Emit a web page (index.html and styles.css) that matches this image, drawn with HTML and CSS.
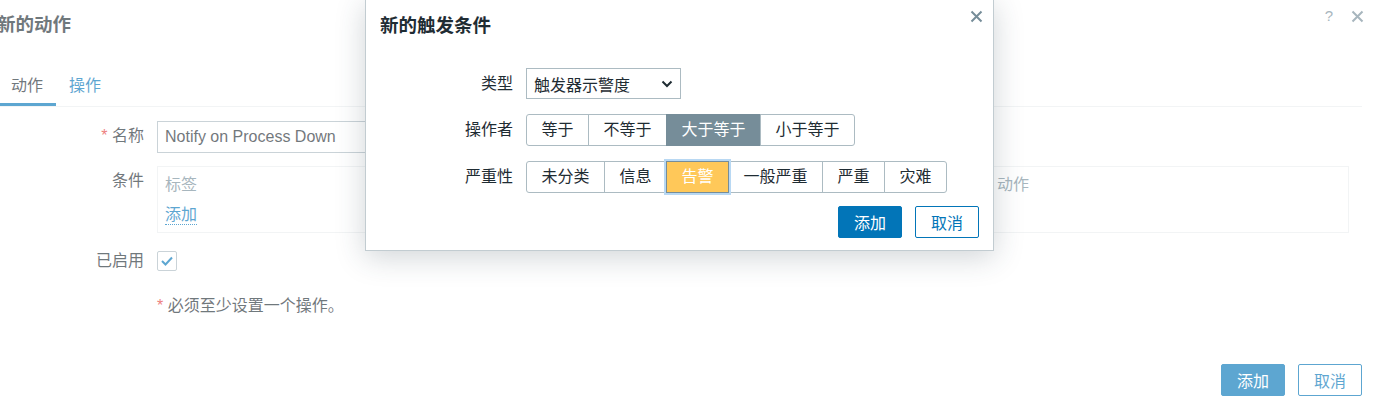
FILE: index.html
```html
<!DOCTYPE html>
<html lang="zh">
<head>
<meta charset="utf-8">
<title>新的触发条件</title>
<link rel="stylesheet" href="styles.css">
</head>
<body>
<div class="page">
  <div class="dlg">
    <div class="dlg-head">
      <h4 class="dlg-title">新的动作</h4>
      <div class="head-tools">
        <span class="help">?</span>
        <svg class="x-icon" width="13" height="13" viewBox="0 0 13 13"><path d="M1.5 1.5 L11.5 11.5 M11.5 1.5 L1.5 11.5" stroke="currentColor" stroke-width="2" fill="none"/></svg>
      </div>
    </div>
    <div class="tabs">
      <a class="tab active">动作</a>
      <a class="tab">操作</a>
    </div>
    <div class="form">
      <div class="lbl"><span class="req">*</span> 名称</div>
      <div class="ctl"><div class="text-input">Notify on Process Down</div></div>

      <div class="lbl">条件</div>
      <div class="ctl">
        <div class="cond">
          <div class="cond-row">
            <span class="cond-h c1">标签</span>
            <span class="cond-h c2">名称</span>
            <span class="cond-h c3">动作</span>
          </div>
          <div class="cond-row"><a class="link">添加</a></div>
        </div>
      </div>

      <div class="lbl lbl-cb">已启用</div>
      <div class="ctl ctl-cb">
        <span class="cb"><svg width="14" height="12" viewBox="0 0 14 12"><path d="M2 6 L5.5 9.5 L12 2.5" stroke="#0275b8" stroke-width="2" fill="none"/></svg></span>
      </div>

      <div></div>
      <div class="note"><span class="req">*</span> 必须至少设置一个操作。</div>
    </div>
    <div class="foot">
      <button class="btn primary">添加</button>
      <button class="btn alt">取消</button>
    </div>
  </div>

  <div class="dim"></div>

  <div class="modal">
    <div class="modal-head">
      <h4 class="modal-title">新的触发条件</h4>
      <svg class="modal-x" width="13" height="13" viewBox="0 0 13 13"><path d="M1.5 1.5 L11.5 11.5 M11.5 1.5 L1.5 11.5" stroke="currentColor" stroke-width="2" fill="none"/></svg>
    </div>
    <div class="mform">
      <div class="mlbl">类型</div>
      <div class="mctl">
        <div class="select"><span>触发器示警度</span>
          <svg width="12" height="8" viewBox="0 0 12 8"><path d="M1.5 1.5 L6 6 L10.5 1.5" stroke="#1f2c33" stroke-width="2" fill="none"/></svg>
        </div>
      </div>

      <div class="mlbl">操作者</div>
      <div class="mctl">
        <div class="seg">
          <span class="seg-b">等于</span>
          <span class="seg-b">不等于</span>
          <span class="seg-b on">大于等于</span>
          <span class="seg-b">小于等于</span>
        </div>
      </div>

      <div class="mlbl">严重性</div>
      <div class="mctl">
        <div class="seg">
          <span class="seg-b">未分类</span>
          <span class="seg-b">信息</span>
          <span class="seg-b warn">告警</span>
          <span class="seg-b">一般严重</span>
          <span class="seg-b">严重</span>
          <span class="seg-b">灾难</span>
        </div>
      </div>
    </div>
    <div class="mfoot">
      <button class="btn primary">添加</button>
      <button class="btn alt">取消</button>
    </div>
  </div>
</div>
</body>
</html>
```
FILE: styles.css
```css
* { box-sizing: border-box; }
html, body {
  margin: 0;
  padding: 0;
  background: #ffffff;
  overflow: hidden;
}
body {
  width: 1373px;
  height: 409px;
  font-family: "Liberation Sans", "Noto Sans CJK SC", sans-serif;
  font-size: 16px;
  color: #1f2c33;
}
.page {
  position: relative;
  width: 1373px;
  height: 409px;
}

/* background dialog */
.dlg {
  margin-left: -3px;
  padding-right: 11px;
  height: 409px;
  display: flex;
  flex-direction: column;
}
.dlg-head {
  height: 50px;
  display: flex;
  justify-content: space-between;
  align-items: flex-start;
}
.dlg-title {
  margin: 0;
  padding-top: 13px;
  font-size: 18.5px;
  line-height: 24px;
  font-weight: bold;
}
.head-tools {
  display: flex;
  align-items: center;
  gap: 18px;
  padding-top: 6px;
  color: #768d99;
}
.help {
  font-size: 15px;
  line-height: 20px;
}
.x-icon { display: block; margin-right: -2px; }

.tabs {
  margin-top: 26px;
  margin-left: 1px;
  display: flex;
  border-bottom: 1px solid #ebeef0;
}
.tab {
  padding: 0 13px 7px;
  line-height: 20px;
  border-bottom: 3px solid transparent;
  color: #0275b8;
}
.tab.active {
  color: #1f2c33;
  border-bottom-color: #0275b8;
}

.form {
  display: grid;
  grid-template-columns: 147px 1fr;
  column-gap: 13px;
  row-gap: 13px;
  padding-top: 14px;
}
.lbl {
  text-align: right;
  line-height: 30px;
}
.req { color: #e33734; }
.text-input {
  width: 600px;
  height: 32px;
  border: 1px solid #acbbc2;
  padding: 0 7px;
  line-height: 30px;
}
.cond {
  margin-right: 13px;
  height: 67px;
  border: 1px solid #ebeef0;
  padding: 8px 7px 0;
}
.cond-row {
  display: flex;
  line-height: 20px;
}
.cond-row + .cond-row { margin-top: 10px; }
.cond-h { color: #768d99; }
.c1 { width: 300px; }
.c2 { width: 532px; }
.link {
  color: #0275b8;
  border-bottom: 1px dotted #0275b8;
  line-height: 19px;
}
.lbl-cb { line-height: 30px; }
.ctl-cb {
  height: 30px;
  display: flex;
  align-items: center;
}
.cb {
  width: 20px;
  height: 20px;
  border: 1px solid #acbbc2;
  border-radius: 2px;
  display: flex;
  align-items: center;
  justify-content: center;
}
.note {
  padding-top: 7px;
  line-height: 20px;
}

.foot {
  margin-top: auto;
  margin-bottom: 13px;
  display: flex;
  justify-content: flex-end;
  gap: 13px;
}
.btn {
  font-family: inherit;
  font-size: 16px;
  height: 32px;
  width: 64px;
  padding: 0;
  border-radius: 2px;
  border: 1px solid #0275b8;
  cursor: pointer;
}
.btn.primary { background: #0275b8; color: #ffffff; }
.btn.alt { background: #ffffff; color: #0275b8; }

/* dimming layer over the background dialog */
.dim {
  position: absolute;
  inset: 0;
  background: rgba(255, 255, 255, 0.36);
}

/* modal */
.modal {
  position: absolute;
  left: 365px;
  top: -1px;
  width: 629px;
  height: 252px;
  background: #ffffff;
  border: 1px solid #c2ccd1;
  box-shadow: 0 6px 28px rgba(40, 60, 75, 0.22);
  padding: 0 14px 0 0;
}
.modal-head {
  height: 51px;
  display: flex;
  justify-content: space-between;
  align-items: flex-start;
}
.modal-title {
  margin: 0;
  padding: 14px 0 0 14px;
  font-size: 18.5px;
  line-height: 24px;
  font-weight: bold;
}
.modal-x {
  margin-top: 10px;
  margin-right: -4px;
  color: #768d99;
}
.mform {
  margin-top: 17px;
  display: grid;
  grid-template-columns: 147px auto;
  justify-content: start;
  column-gap: 13px;
  row-gap: 15px;
}
.mlbl {
  text-align: right;
  line-height: 31px;
}
.mctl { display: flex; }
.select {
  width: 155px;
  height: 31px;
  border: 1px solid #acbbc2;
  padding: 0 7px;
  display: flex;
  align-items: center;
  justify-content: space-between;
}
.seg { display: flex; }
.seg-b {
  height: 32px;
  line-height: 30px;
  padding: 0 14.5px;
  border: 1px solid #acbbc2;
  background: #ffffff;
  margin-left: -1px;
  position: relative;
}
.seg-b:first-child {
  margin-left: 0;
  border-radius: 3px 0 0 3px;
}
.seg-b:last-child { border-radius: 0 3px 3px 0; }
.seg-b.on {
  background: #768d99;
  border-color: #768d99;
  color: #ffffff;
}
.seg-b.warn {
  background: #ffc859;
  border-color: #768d99;
  color: #ffffff;
  box-shadow: 0 0 0 2px #b8d8f3;
  z-index: 1;
}
.mfoot {
  margin-top: 13px;
  display: flex;
  justify-content: flex-end;
  gap: 13px;
}
```
